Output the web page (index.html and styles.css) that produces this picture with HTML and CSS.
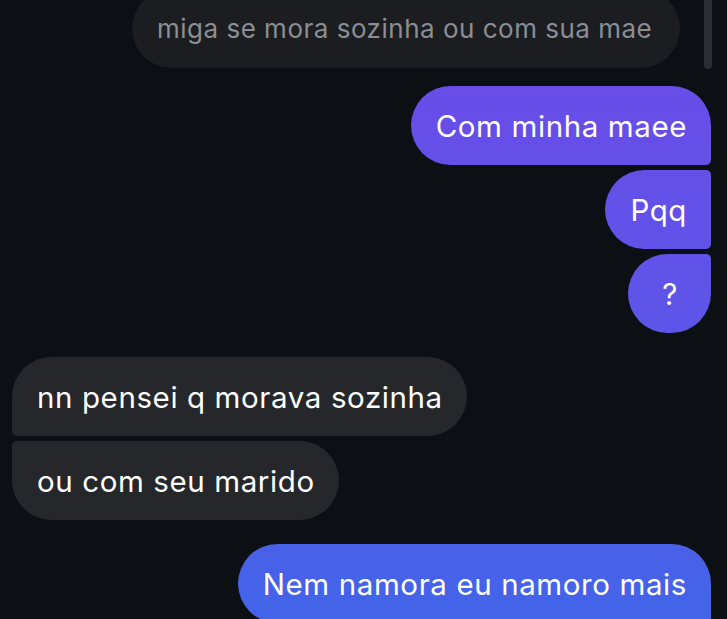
FILE: index.html
```html
<!DOCTYPE html>
<html lang="pt">
<head>
<meta charset="utf-8">
<link rel="stylesheet" href="styles.css">
</head>
<body>
<div class="screen">
  <div class="thread">
    <div class="group in faded">
      <div class="bubble only">miga se mora sozinha ou com sua mae</div>
    </div>
    <div class="group out">
      <div class="bubble first">Com minha maee</div>
      <div class="bubble mid">Pqq</div>
      <div class="bubble last">?</div>
    </div>
    <div class="group in">
      <div class="bubble first">nn pensei q morava sozinha</div>
      <div class="bubble last">ou com seu marido</div>
    </div>
    <div class="group out">
      <div class="bubble first">Nem namora eu namoro mais</div>
    </div>
  </div>
  <div class="scrollbar"></div>
</div>
</body>
</html>
```
FILE: styles.css
```css
html, body {
  margin: 0;
  padding: 0;
  background: #0c0f13;
}
.screen {
  width: 727px;
  height: 619px;
  overflow: hidden;
  position: relative;
  font-family: Inter, "Noto Sans", sans-serif;
}
.scrollbar {
  position: absolute;
  right: 15px;
  top: -10px;
  width: 8px;
  height: 79px;
  border-radius: 4px;
  background: #2a2d32;
}
.thread {
  display: flex;
  flex-direction: column;
  gap: 24px;
  padding: 0 16px 0 12px;
  margin-top: -11px;
}
.group {
  display: flex;
  flex-direction: column;
  gap: 5px;
}
.group.out { align-items: flex-end; }
.group.in { align-items: flex-start; }
.group.faded { padding-left: 120px; margin-bottom: -6px; }
.bubble {
  height: 79px;
  min-width: 83px;
  box-sizing: border-box;
  display: flex;
  align-items: center;
  justify-content: center;
  padding: 0 24px 0 25px;
  font-size: 29.5px;
  letter-spacing: 0.6px;
  border-radius: 40px;
  color: #ffffff;
  white-space: nowrap;
}
.in .bubble { background: #25272b; }
.faded .bubble {
  background: #1b1d21;
  color: #8b8e93;
  font-size: 26px;
  letter-spacing: 0.5px;
  padding: 0 28px 0 25px;
}
.out .bubble {
  background: linear-gradient(to bottom, #6c4ae6 0px, #5d55e9 330px, #4264e8 619px) fixed;
}
.out .first { border-bottom-right-radius: 5px; }
.out .mid { border-top-right-radius: 5px; border-bottom-right-radius: 5px; }
.out .last { border-top-right-radius: 5px; }
.in .first { border-bottom-left-radius: 5px; }
.in .last { border-top-left-radius: 5px; }
```
